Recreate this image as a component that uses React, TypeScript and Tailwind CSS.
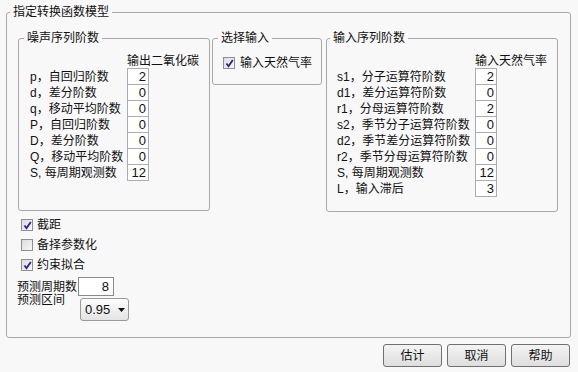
import React from "react";

const FONT = { fontFamily: '"Liberation Sans", "Noto Sans CJK SC", sans-serif' };

function Check({ checked }: { checked: boolean }) {
  return (
    <div className="w-[12px] h-[12px] border border-[#8e8f8f] bg-[#f4f4f4] flex items-center justify-center shrink-0">
      <div className="w-[10px] h-[10px] bg-gradient-to-br from-[#dcdcdc] to-[#f8f8f8] flex items-center justify-center">
        {checked && (
          <svg width="9" height="9" viewBox="0 0 9 9">
            <path d="M1.5 4.5 L3.5 7.2 L7.8 1" fill="none" stroke="#26248f" strokeWidth="1.8" />
          </svg>
        )}
      </div>
    </div>
  );
}

function NumRow({ label, value, labelW, pl }: { label: string; value: string; labelW: string; pl: string }) {
  return (
    <div className="flex items-center h-[17px] -mt-px first:mt-0">
      <div className={`${labelW} ${pl} text-[12px] leading-[14px] whitespace-nowrap`}>{label}</div>
      <div className="w-[22px] h-[17px] border border-[#abadb3] bg-white text-right pr-[2px] text-[13px] leading-[15px]">
        {value}
      </div>
    </div>
  );
}

function Button({ children }: { children: React.ReactNode }) {
  return (
    <div className="w-[59px] h-[23px] rounded-[3px] border border-[#707070] bg-gradient-to-b from-[#f4f4f4] to-[#dedede] flex items-center justify-center text-[12px]">
      {children}
    </div>
  );
}

export default function App() {
  const noise: [string, string][] = [
    ["p，自回归阶数", "2"],
    ["d，差分阶数", "0"],
    ["q，移动平均阶数", "0"],
    ["P，自回归阶数", "0"],
    ["D，差分阶数", "0"],
    ["Q，移动平均阶数", "0"],
    ["S, 每周期观测数", "12"],
  ];
  const input: [string, string][] = [
    ["s1，分子运算符阶数", "2"],
    ["d1，差分运算符阶数", "0"],
    ["r1，分母运算符阶数", "2"],
    ["s2，季节分子运算符阶数", "0"],
    ["d2，季节差分运算符阶数", "0"],
    ["r2，季节分母运算符阶数", "0"],
    ["S, 每周期观测数", "12"],
    ["L，输入滞后", "3"],
  ];
  return (
    <div className="w-[578px] h-[372px] bg-[#f8f8f8] text-[#111] overflow-hidden pt-[5px]" style={FONT}>
      <fieldset className="ml-[6px] w-[565px] h-[333px] border border-[#a8a8a8] rounded-[3px] p-0 m-0 min-w-0">
        <legend className="ml-[3px] px-[3px] text-[12px] leading-[14px]">指定转换函数模型</legend>
        <div className="flex items-start mt-[12px] ml-[11px]">
          <fieldset className="w-[192px] h-[180px] border border-[#a8a8a8] rounded-[3px] p-0 m-0 min-w-0">
            <legend className="ml-[5px] px-[3px] text-[12px] leading-[14px]">噪声序列阶数</legend>
            <div className="mt-[9px] pl-[108px] text-[12px] leading-[14px] whitespace-nowrap">输出二氧化碳</div>
            <div>
              {noise.map(([l, v], i) => (
                <NumRow key={i} label={l} value={v} labelW="w-[108px]" pl="pl-[11px]" />
              ))}
            </div>
          </fieldset>
          <fieldset className="ml-[2px] w-[110px] h-[54px] border border-[#a8a8a8] rounded-[3px] p-0 m-0 min-w-0">
            <legend className="ml-[5px] px-[3px] text-[12px] leading-[14px]">选择输入</legend>
            <div className="mt-[11px] pl-[10px] h-[14px] flex items-center gap-[5px] text-[12px] leading-[14px]">
              <Check checked />
              <span>输入天然气率</span>
            </div>
          </fieldset>
          <fieldset className="ml-[4px] w-[232px] h-[181px] border border-[#a8a8a8] rounded-[3px] p-0 m-0 min-w-0">
            <legend className="ml-[3px] px-[3px] text-[12px] leading-[14px]">输入序列阶数</legend>
            <div className="mt-[9px] pl-[148px] text-[12px] leading-[14px] whitespace-nowrap">输入天然气率</div>
            <div>
              {input.map(([l, v], i) => (
                <NumRow key={i} label={l} value={v} labelW="w-[148px]" pl="pl-[10px]" />
              ))}
            </div>
          </fieldset>
        </div>
        <div className="mt-[3px] pl-[14px] text-[12px] leading-[14px]">
          <div className="h-[20px] flex items-center gap-[4px]">
            <Check checked />
            <span>截距</span>
          </div>
          <div className="h-[20px] flex items-center gap-[4px]">
            <Check checked={false} />
            <span>备择参数化</span>
          </div>
          <div className="h-[20px] flex items-center gap-[4px]">
            <Check checked />
            <span>约束拟合</span>
          </div>
        </div>
        <div className="mt-[2px] pl-[10px] flex items-center h-[19px] text-[12px] leading-[14px]">
          <span className="w-[61px] whitespace-nowrap">预测周期数</span>
          <div className="w-[36px] h-[19px] border border-[#8a8a8a] bg-white text-right pr-[4px] text-[13px] leading-[17px]">8</div>
        </div>
        <div className="-mt-[3px] pl-[10px] flex items-start text-[12px] leading-[14px]">
          <span className="w-[63px] whitespace-nowrap">预测区间</span>
          <div className="mt-[5px] w-[49px] h-[23px] rounded-[3px] border border-[#9a9a9a] bg-gradient-to-b from-[#fdfdfd] to-[#e4e4e4] flex items-center pl-[4px] text-[13px]">
            <span>0.95</span>
            <svg className="ml-[8px]" width="7" height="4" viewBox="0 0 7 4">
              <path d="M0 0 H7 L3.5 4 Z" fill="#111" />
            </svg>
          </div>
        </div>
      </fieldset>
      <div className="mt-[6px] pr-[8px] flex justify-end gap-[5px]">
        <Button>估计</Button>
        <Button>取消</Button>
        <Button>帮助</Button>
      </div>
    </div>
  );
}
